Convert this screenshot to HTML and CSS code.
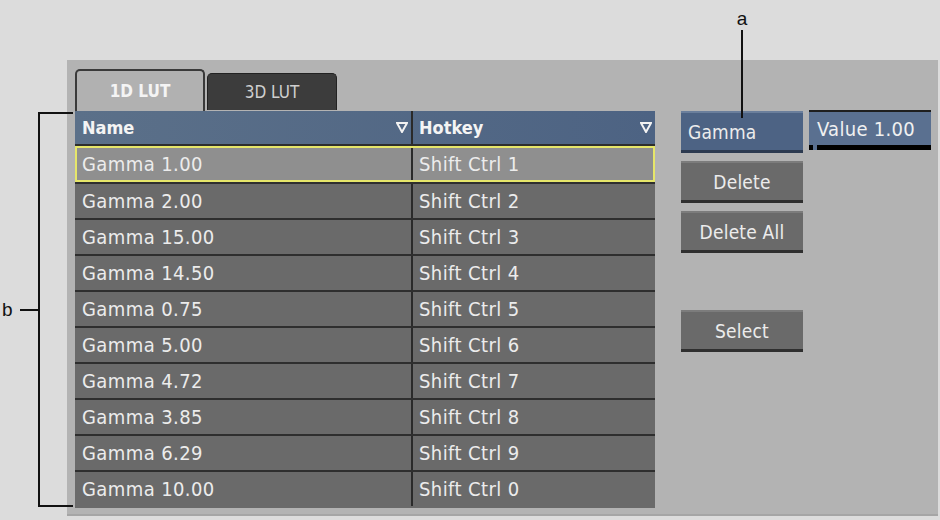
FILE: index.html
```html
<!DOCTYPE html>
<html>
<head>
<meta charset="utf-8">
<link rel="stylesheet" href="styles.css">
</head>
<body>
<div class="stage">
  <div class="panel">
    <div class="left">
      <div class="tabs">
        <div class="tab active">1D LUT</div>
        <div class="tab">3D LUT</div>
      </div>
      <div class="table">
        <div class="row head">
          <div class="cell name">Name<svg class="tri" width="12" height="11" viewBox="0 0 12 11"><polygon points="1,1 11,1 6,10" fill="none" stroke="#f2f2f2" stroke-width="2" stroke-linejoin="miter"/></svg></div>
          <div class="cell key">Hotkey<svg class="tri" width="12" height="11" viewBox="0 0 12 11"><polygon points="1,1 11,1 6,10" fill="none" stroke="#f2f2f2" stroke-width="2" stroke-linejoin="miter"/></svg></div>
        </div>
        <div class="row sel"><div class="cell name">Gamma 1.00</div><div class="cell key">Shift Ctrl 1</div></div>
        <div class="row"><div class="cell name">Gamma 2.00</div><div class="cell key">Shift Ctrl 2</div></div>
        <div class="row"><div class="cell name">Gamma 15.00</div><div class="cell key">Shift Ctrl 3</div></div>
        <div class="row"><div class="cell name">Gamma 14.50</div><div class="cell key">Shift Ctrl 4</div></div>
        <div class="row"><div class="cell name">Gamma 0.75</div><div class="cell key">Shift Ctrl 5</div></div>
        <div class="row"><div class="cell name">Gamma 5.00</div><div class="cell key">Shift Ctrl 6</div></div>
        <div class="row"><div class="cell name">Gamma 4.72</div><div class="cell key">Shift Ctrl 7</div></div>
        <div class="row"><div class="cell name">Gamma 3.85</div><div class="cell key">Shift Ctrl 8</div></div>
        <div class="row"><div class="cell name">Gamma 6.29</div><div class="cell key">Shift Ctrl 9</div></div>
        <div class="row"><div class="cell name">Gamma 10.00</div><div class="cell key">Shift Ctrl 0</div></div>
      </div>
    </div>
    <div class="right">
      <div class="toprow">
        <div class="btn blue">Gamma</div>
        <div class="field">Value 1.00</div>
      </div>
      <div class="btn">Delete</div>
      <div class="btn">Delete All</div>
      <div class="btn select">Select</div>
    </div>
  </div>
  <div class="callout-a"><span class="lbl">a</span><span class="vline"></span></div>
  <div class="callout-b"><span class="lbl">b</span><span class="hline"></span><span class="bracket"></span></div>
</div>
</body>
</html>
```
FILE: styles.css
```css
html, body {
  margin: 0;
  padding: 0;
  background: #dcdcdc;
}
.stage {
  position: relative;
  width: 940px;
  height: 520px;
  font-family: "DejaVu Sans Condensed", "DejaVu Sans", sans-serif;
  font-stretch: condensed;
}
.panel {
  position: absolute;
  left: 67px;
  top: 60px;
  width: 871px;
  height: 456px;
  background: #b3b3b3;
  box-sizing: border-box;
  padding: 9px 0 0 8px;
  display: flex;
  gap: 26px;
  border-bottom: 2px solid #a5a5a5;
}
.left {
  width: 580px;
  display: flex;
  flex-direction: column;
}
.tabs {
  display: flex;
  align-items: flex-end;
  gap: 2px;
  height: 42px;
}
.tab {
  width: 130px;
  height: 37px;
  box-sizing: border-box;
  background: #3c3c3c;
  border: 1px solid #222;
  border-bottom: none;
  border-radius: 5px 5px 0 0;
  color: #cfcfcf;
  font-size: 17px;
  display: flex;
  align-items: center;
  justify-content: center;
  margin-bottom: 1px;
}
.tab.active {
  height: 42px;
  background: #b1b1b1;
  border: 2px solid #3a3a3a;
  border-bottom: none;
  color: #f4f4f4;
  font-weight: bold;
  margin-bottom: 0;
}
.table {
  display: flex;
  flex-direction: column;
  background: #6a6a6a;
  padding-bottom: 2px;
}
.row {
  display: flex;
  height: 36px;
  box-sizing: border-box;
  border-top: 2px solid #2e2e2e;
  color: #ececec;
  font-size: 20px;
  letter-spacing: 0.4px;
}
.row:nth-child(2) { border-top: none; }
.row.head {
  height: 35px;
  border-top: none;
  border-bottom: 2px solid #2e2e2e;
  background: linear-gradient(90deg, #5b7089, #4d6383);
  color: #f4f4f4;
  font-weight: bold;
  font-size: 18px;
  letter-spacing: 0;
}
.row.sel {
  background: #8f8f8f;
  border: 2px solid #e6e66a;
  height: 36px;
}
.cell {
  display: flex;
  align-items: center;
  box-sizing: border-box;
  position: relative;
}
.cell.name {
  width: 338px;
  padding-left: 7px;
  border-right: 2px solid #2a2a2a;
}
.row.sel .cell.name { width: 336px; padding-left: 5px; }
.cell.key {
  flex: 1;
  padding-left: 6px;
}
.tri {
  position: absolute;
  right: 3px;
  top: 11px;
}
.right {
  display: flex;
  flex-direction: column;
  padding-top: 41px;
  gap: 8px;
}
.toprow {
  display: flex;
  gap: 6px;
  align-items: flex-start;
}
.btn {
  width: 122px;
  height: 42px;
  box-sizing: border-box;
  background: #6a6a6a;
  border-top: 2px solid #7c7c7c;
  border-bottom: 3px solid #2f2f2f;
  color: #ececec;
  font-size: 19px;
  letter-spacing: 0.2px;
  display: flex;
  align-items: center;
  justify-content: center;
}
.btn.blue {
  background: #4d6384;
  border-top: 2px solid #6b7f9c;
  border-bottom: 3px solid #2c3a50;
  justify-content: flex-start;
  padding-left: 7px;
  margin-top: 1px;
}
.btn.select {
  margin-top: 49px;
}
.field {
  width: 122px;
  height: 40px;
  box-sizing: border-box;
  background: linear-gradient(#000 0 0) left bottom / 4px 5px no-repeat,
              linear-gradient(#000 0 0) 8px bottom / 114px 5px no-repeat,
              #5a7090;
  border-top: 2px solid #1e1e1e;
  color: #f0f0f0;
  font-size: 20px;
  letter-spacing: 0.3px;
  padding: 0 0 5px 8px;
  display: flex;
  align-items: center;
}
.callout-a {
  position: absolute;
  left: 735px;
  top: 8px;
  width: 14px;
  display: flex;
  flex-direction: column;
  align-items: center;
}
.lbl {
  font-family: "Liberation Sans", Arial, sans-serif;
  font-size: 19px;
  color: #111;
  line-height: 22px;
}
.vline {
  width: 2px;
  height: 88px;
  background: #111;
}
.callout-b {
  position: absolute;
  left: 0;
  top: 112px;
  width: 75px;
  height: 396px;
}
.callout-b .lbl {
  position: absolute;
  left: 2px;
  top: 187px;
}
.hline {
  position: absolute;
  left: 20px;
  top: 197px;
  width: 19px;
  height: 2px;
  background: #111;
}
.bracket {
  position: absolute;
  left: 38px;
  top: 0;
  width: 35px;
  height: 395px;
  box-sizing: border-box;
  border: 2px solid #111;
  border-right: none;
}
```
